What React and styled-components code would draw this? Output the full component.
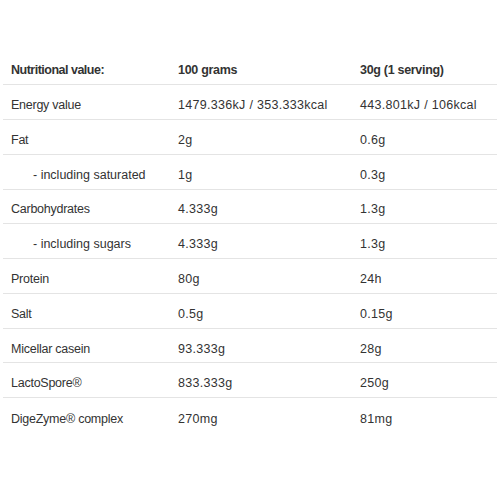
import React from "react";
import styled, { createGlobalStyle } from "styled-components";

const Global = createGlobalStyle`
  html, body { margin: 0; padding: 0; background: #fff; }
  body { font-family: "Liberation Sans", Arial, sans-serif; color: #333; }
`;

const Table = styled.div`
  margin: 50.5px 3px 0 3px;
  width: 494px;
`;

const Row = styled.div`
  display: grid;
  grid-template-columns: 168px 182px 1fr;
  align-items: center;
  height: 34.78px;
  box-sizing: border-box;
  padding-top: 6px;
  border-bottom: ${(p) => (p.$last ? "none" : "1px solid #e4e4e4")};
  font-size: 12.5px;
  font-weight: ${(p) => (p.$head ? 700 : 400)};
  color: #333;
`;

const Label = styled.div`
  padding-left: ${(p) => (p.$indent ? "30px" : "8px")};
  white-space: nowrap;
  letter-spacing: ${(p) => (p.$head ? "-0.5px" : p.$indent ? "0" : "-0.25px")};
`;

const Value = styled.div`
  padding-left: 7px;
  white-space: nowrap;
  letter-spacing: ${(p) => (p.$head ? "-0.3px" : "0.3px")};
`;

const rows = [
  ["Energy value", "1479.336kJ / 353.333kcal", "443.801kJ / 106kcal"],
  ["Fat", "2g", "0.6g"],
  ["- including saturated", "1g", "0.3g", true],
  ["Carbohydrates", "4.333g", "1.3g"],
  ["- including sugars", "4.333g", "1.3g", true],
  ["Protein", "80g", "24h"],
  ["Salt", "0.5g", "0.15g"],
  ["Micellar casein", "93.333g", "28g"],
  ["LactoSpore®", "833.333g", "250g"],
  ["DigeZyme® complex", "270mg", "81mg"],
];

export default function App() {
  return (
    <>
      <Global />
      <Table>
        <Row $head>
          <Label $head>Nutritional value:</Label>
          <Value $head>100 grams</Value>
          <Value $head>30g (1 serving)</Value>
        </Row>
        {rows.map((r, i) => (
          <Row key={i} $last={i === rows.length - 1}>
            <Label $indent={r[3]}>{r[0]}</Label>
            <Value>{r[1]}</Value>
            <Value>{r[2]}</Value>
          </Row>
        ))}
      </Table>
    </>
  );
}
